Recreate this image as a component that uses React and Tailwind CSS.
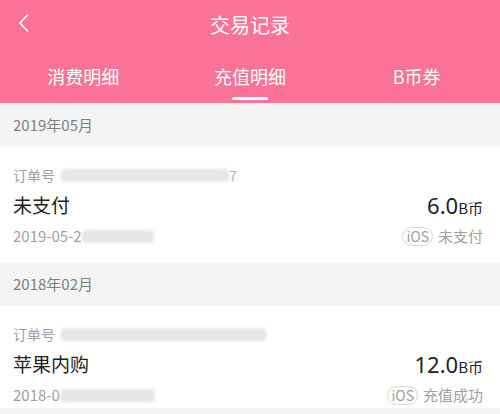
import React from 'react';

const font = { fontFamily: '"Noto Sans CJK SC", "Noto Sans", sans-serif' };

// blurred stand-in for the masked digits
const Smudge = ({ className }) => (
    <span className={`inline-block h-[13px] rounded-sm bg-[#e6e6e6] blur-[1.5px] ${className}`} />
);

const Tabs = () => {
    const tabs = ['消费明细', '充值明细', 'B币券'];
    return (
        <div className="flex h-[53px]">
            {tabs.map((t, i) => (
                <div key={t} className="flex-1 flex flex-col items-center">
                    <span className="mt-[13px] text-[18px] leading-[26px] text-white">{t}</span>
                    {i === 1 && <span className="mt-[8px] block h-[3px] w-[36px] rounded-full bg-white" />}
                </div>
            ))}
        </div>
    );
};

const MonthHeader = ({ label, h }) => (
    <div className={`flex items-center bg-[#f4f4f4] px-[13px] text-[15px] text-[#808080] ${h}`}>
        {label}
    </div>
);

const OrderCard = ({ title, amount, datePrefix, orderSmudge, orderTail, dateSmudge, status, h }) => (
    <div className={`bg-white px-[13px] ${h}`}>
        <div className="flex items-center pt-[18px] h-[38px] text-[14px] text-[#a0a0a0]">
            <span>订单号</span>
            <Smudge className={`ml-[6px] ${orderSmudge}`} />
            {orderTail && <span className="text-[#b0b0b0]">{orderTail}</span>}
        </div>
        <div className="flex items-center justify-between h-[28px] mt-[6px] pr-[4px]">
            <span className="text-[19px] text-[#222]">{title}</span>
            <span className="text-[#222]">
                <span className="text-[22px]" style={{ fontFamily: '"Noto Sans", sans-serif' }}>{amount}</span>
                <span className="text-[15px]">B币</span>
            </span>
        </div>
        <div className="flex items-center justify-between h-[24px] mt-[5px] pr-[4px]">
            <div className="flex items-center text-[15px] text-[#a0a0a0]">
                <span>{datePrefix}</span>
                <Smudge className={dateSmudge} />
            </div>
            <div className="flex items-center text-[15px] text-[#a0a0a0]">
                <span className="rounded-full border border-[#d8d8d8] px-[3px] text-[14px] leading-[17px]">iOS</span>
                <span className="ml-[5px]">{status}</span>
            </div>
        </div>
    </div>
);

export default function App() {
    return (
        <div className="w-[500px] h-[414px] overflow-hidden bg-[#f4f4f4]" style={font}>
            {/* header */}
            <div className="bg-[#fa7298]">
                <div className="relative flex items-center justify-center h-[50px]">
                    <svg className="absolute left-[17px] top-[13px]" width="14" height="20" viewBox="0 0 14 20">
                        <path d="M11 1.5 L3 10 L11 18.5" fill="none" stroke="white" strokeWidth="1.6" />
                    </svg>
                    <span className="text-[20px] text-white">交易记录</span>
                </div>
                <Tabs />
            </div>

            <MonthHeader label="2019年05月" h="h-[44px]" />
            <OrderCard
                h="h-[116px]"
                title="未支付"
                amount="6.0"
                datePrefix="2019-05-2"
                orderSmudge="w-[168px]"
                orderTail="7"
                dateSmudge="w-[72px]"
                status="未支付"
            />
            <MonthHeader label="2018年02月" h="h-[43px]" />
            <OrderCard
                h="h-[102px]"
                title="苹果内购"
                amount="12.0"
                datePrefix="2018-0"
                orderSmudge="w-[205px]"
                dateSmudge="w-[95px]"
                status="充值成功"
            />
        </div>
    );
}
